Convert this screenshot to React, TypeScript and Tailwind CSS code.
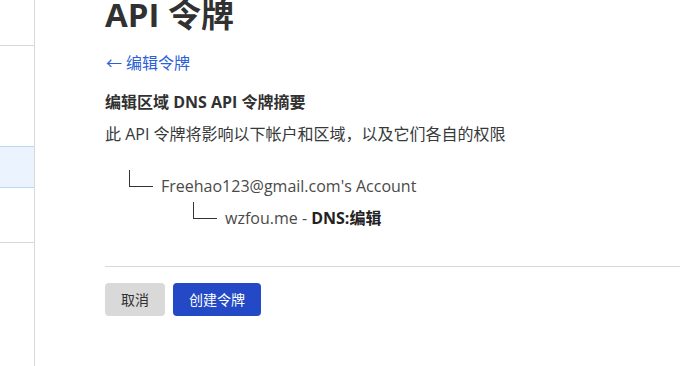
const font = { fontFamily: "'Open Sans', 'Noto Sans CJK SC', sans-serif" };

function Connector() {
  return <div className="-mt-[4px] h-[17px] w-[24px] shrink-0 self-start border-b border-l border-[#333]" />;
}

export default function App() {
  return (
    <div className="flex h-[366px] w-[680px] overflow-hidden bg-white" style={font}>
      <aside className="flex w-[35px] shrink-0 flex-col border-r border-[#d9d9d9]">
        <div className="h-[46px] border-b border-[#d9d9d9]" />
        <div className="h-[100px]" />
        <div className="h-[42px] border-y border-[#bcd5fb] bg-[#ebf3ff]" />
        <div className="h-[55px] border-b border-[#d9d9d9]" />
      </aside>

      <main className="flex-1 pl-[70px]">
        <h1 className="-mt-[5px] text-[33px] font-bold leading-[40px] text-[#313131]">API 令牌</h1>

        <a className="mt-[16px] flex items-center gap-[4px] text-[16px] leading-[24px] text-[#2c5fd6]">
          <span className="pl-[1px]">←</span>
          <span>编辑令牌</span>
        </a>

        <h2 className="mt-[15px] text-[16px] font-bold leading-[24px] text-[#313131]">
          编辑区域 DNS API 令牌摘要
        </h2>
        <p className="mt-[8px] text-[16px] leading-[24px] text-[#36393a]">
          此 API 令牌将影响以下帐户和区域，以及它们各自的权限
        </p>

        <div className="mt-[28px] flex items-start gap-[8px] pl-[24px] text-[16px] leading-[24px] text-[#4a4a4a]">
          <Connector />
          <span>Freehao123@gmail.com's Account</span>
        </div>
        <div className="mt-[8px] flex items-start gap-[8px] pl-[88px] text-[16px] leading-[24px] text-[#4a4a4a]">
          <Connector />
          <span>
            wzfou.me - <b className="font-bold text-[#222]">DNS:编辑</b>
          </span>
        </div>

        <div className="mt-[36px] border-t border-[#d9d9d9]" />

        <div className="mt-[16px] flex gap-[8px]">
          <button className="h-[33px] rounded-[4px] bg-[#d9d9d9] px-4 text-sm text-[#313131]">取消</button>
          <button className="h-[33px] rounded-[4px] bg-[#2349c6] px-4 text-sm text-white">创建令牌</button>
        </div>
      </main>
    </div>
  );
}
